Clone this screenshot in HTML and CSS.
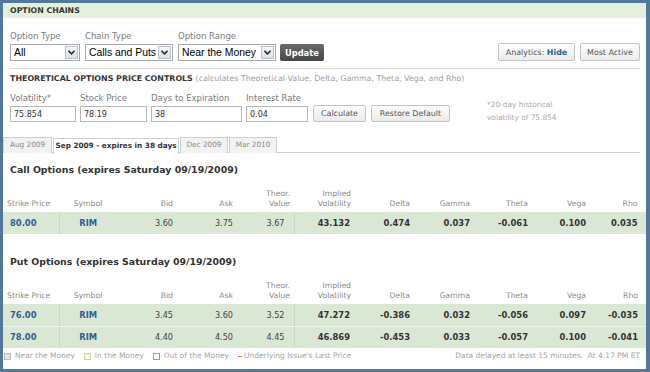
FILE: index.html
```html
<!DOCTYPE html>
<html lang="en">
<head>
    <meta charset="UTF-8">
    <title>Option Chains</title>
    <link rel="stylesheet" href="styles.css">
</head>
<body>
<div class="frame">
    <div class="hd">OPTION CHAINS</div>

    <div class="top">
        <div class="filters">
            <div class="field">
                <label>Option Type</label>
                <div class="sel w-type"><span class="val">All</span><span class="arr"><svg width="7" height="5" viewBox="0 0 7 5"><path d="M0.5 0.8 L3.5 3.8 L6.5 0.8" fill="none" stroke="#333" stroke-width="1.6"/></svg></span></div>
            </div>
            <div class="field">
                <label>Chain Type</label>
                <div class="sel w-chain"><span class="val">Calls and Puts</span><span class="arr"><svg width="7" height="5" viewBox="0 0 7 5"><path d="M0.5 0.8 L3.5 3.8 L6.5 0.8" fill="none" stroke="#333" stroke-width="1.6"/></svg></span></div>
            </div>
            <div class="field">
                <label>Option Range</label>
                <div class="sel w-range"><span class="val">Near the Money</span><span class="arr"><svg width="7" height="5" viewBox="0 0 7 5"><path d="M0.5 0.8 L3.5 3.8 L6.5 0.8" fill="none" stroke="#333" stroke-width="1.6"/></svg></span></div>
            </div>
            <button class="btn-dark">Update</button>
            <div class="right-btns">
                <button class="btn btn-analytics">Analytics: <b>Hide</b></button>
                <button class="btn btn-active">Most Active</button>
            </div>
        </div>

        <div class="rule"></div>

        <div class="theo-title">THEORETICAL OPTIONS PRICE CONTROLS <span>(calculates Theoretical Value, Delta, Gamma, Theta, Vega, and Rho)</span></div>

        <div class="calc">
            <div class="field">
                <label>Volatility*</label>
                <input class="inp w-vol" type="text" value="75.854">
            </div>
            <div class="field">
                <label>Stock Price</label>
                <input class="inp w-price" type="text" value="78.19">
            </div>
            <div class="field">
                <label>Days to Expiration</label>
                <input class="inp w-days" type="text" value="38">
            </div>
            <div class="field">
                <label>Interest Rate</label>
                <input class="inp w-rate" type="text" value="0.04">
            </div>
            <button class="btn btn-calc">Calculate</button>
            <button class="btn btn-restore">Restore Default</button>
            <div class="note">*20-day historical<br>volatility of 75.854</div>
        </div>
    </div>

    <div class="tabs">
        <div class="tab t-aug">Aug 2009</div>
        <div class="tab active t-sep">Sep 2009 - expires in 38 days</div>
        <div class="tab t-dec">Dec 2009</div>
        <div class="tab t-mar">Mar 2010</div>
    </div>

    <h3 class="sec-title call-title">Call Options (expires Saturday 09/19/2009)</h3>
    <table class="chain">
        <colgroup>
            <col class="c-strike"><col class="c-sym"><col class="c-num"><col class="c-num"><col class="c-theor">
            <col class="c-num"><col class="c-delta"><col class="c-num"><col class="c-sm"><col class="c-sm"><col>
        </colgroup>
        <thead>
            <tr>
                <th class="strike">Strike Price</th><th class="sym">Symbol</th><th>Bid</th><th>Ask</th><th>Theor.<br>Value</th>
                <th class="iv">Implied<br>Volatility</th><th>Delta</th><th>Gamma</th><th>Theta</th><th>Vega</th><th class="last">Rho</th>
            </tr>
        </thead>
        <tbody>
            <tr>
                <td class="strike">80.00</td><td class="sym">RIM</td><td>3.60</td><td>3.75</td><td class="theor">3.67</td>
                <td class="b">43.132</td><td class="b">0.474</td><td class="b">0.037</td><td class="b">-0.061</td><td class="b">0.100</td><td class="b last">0.035</td>
            </tr>
        </tbody>
    </table>

    <h3 class="sec-title put-title">Put Options (expires Saturday 09/19/2009)</h3>
    <table class="chain">
        <colgroup>
            <col class="c-strike"><col class="c-sym"><col class="c-num"><col class="c-num"><col class="c-theor">
            <col class="c-num"><col class="c-delta"><col class="c-num"><col class="c-sm"><col class="c-sm"><col>
        </colgroup>
        <thead>
            <tr>
                <th class="strike">Strike Price</th><th class="sym">Symbol</th><th>Bid</th><th>Ask</th><th>Theor.<br>Value</th>
                <th class="iv">Implied<br>Volatility</th><th>Delta</th><th>Gamma</th><th>Theta</th><th>Vega</th><th class="last">Rho</th>
            </tr>
        </thead>
        <tbody>
            <tr>
                <td class="strike">76.00</td><td class="sym">RIM</td><td>3.45</td><td>3.60</td><td class="theor">3.52</td>
                <td class="b">47.272</td><td class="b">-0.386</td><td class="b">0.032</td><td class="b">-0.056</td><td class="b">0.097</td><td class="b last">-0.035</td>
            </tr>
            <tr>
                <td class="strike">78.00</td><td class="sym">RIM</td><td>4.40</td><td>4.50</td><td class="theor">4.45</td>
                <td class="b">46.869</td><td class="b">-0.453</td><td class="b">0.033</td><td class="b">-0.057</td><td class="b">0.100</td><td class="b last">-0.041</td>
            </tr>
        </tbody>
    </table>

    <div class="legend">
        <span class="key"><i class="sq sq-near"></i>Near the Money</span>
        <span class="key"><i class="sq sq-in"></i>In the Money</span>
        <span class="key"><i class="sq sq-out"></i>Out of the Money</span>
        <span class="key"><i class="dash"></i>Underlying Issue's Last Price</span>
        <span class="delay">Data delayed at least 15 minutes.&nbsp; At 4:17 PM ET</span>
    </div>
</div>
</body>
</html>
```

FILE: styles.css
```css
* {
    box-sizing: border-box;
}
body {
    margin: 0;
    background-color: #fff;
    font-family: "DejaVu Sans", Verdana, sans-serif;
    color: #333;
}
.frame {
    width: 650px;
    height: 372px;
    border: 3px solid #52799a;
    border-right-width: 4px;
    overflow: hidden;
}
.hd {
    height: 15px;
    line-height: 15px;
    padding-left: 7px;
    background-color: #e3f0dd;
    font-size: 7.8px;
    font-weight: bold;
    color: #333;
}
.top {
    padding: 13px 6px 0 7px;
}
.filters,
.calc {
    display: flex;
    align-items: flex-end;
}
.field {
    display: flex;
    flex-direction: column;
    margin-right: 5px;
}
.field label {
    font-size: 8.5px;
    line-height: 10px;
    margin-bottom: 3px;
    color: #7a7a7a;
}
.sel {
    display: flex;
    align-items: center;
    justify-content: space-between;
    height: 17px;
    padding: 0 1px 0 3px;
    border: 1px solid #a9a9ad;
    font-family: "Liberation Sans", Arial, sans-serif;
    font-size: 10.4px;
    color: #000;
    white-space: nowrap;
}
.sel .arr {
    display: flex;
    flex: none;
    align-items: center;
    justify-content: center;
    width: 13px;
    height: 13px;
    margin-left: 1px;
    border: 1px solid #b9c1cc;
    background: linear-gradient(#f4f6f9, #dde2ea);
}
.w-type { width: 70px; }
.w-chain { width: 88px; }
.w-range { width: 98px; }
.btn-dark {
    height: 17px;
    margin-left: -1px;
    padding: 0 5px;
    border: 0;
    border-radius: 2px;
    background: linear-gradient(#6a6a6a, #474747);
    font-family: "DejaVu Sans", Verdana, sans-serif;
    font-size: 8.3px;
    font-weight: bold;
    color: #fff;
}
.right-btns {
    display: flex;
    margin-left: auto;
}
.btn {
    height: 18px;
    padding: 0 5px;
    border: 1px solid #c4c4c4;
    border-radius: 2px;
    background: linear-gradient(#fdfdfd, #ebebeb);
    font-family: "DejaVu Sans", Verdana, sans-serif;
    font-size: 7.9px;
    color: #555;
    white-space: nowrap;
}
.btn b {
    color: #2e6399;
}
.btn-analytics { width: 77px; }
.btn-active { width: 60px; margin-left: 5px; }
.rule {
    height: 1px;
    margin-top: 7px;
    background-color: #dcdcdc;
}
.theo-title {
    margin-top: 5px;
    line-height: 10px;
    font-size: 7.9px;
    font-weight: bold;
    color: #333;
    white-space: nowrap;
}
.theo-title span {
    font-weight: normal;
    color: #a0a0a0;
}
.calc {
    margin-top: 9px;
}
.calc .field {
    margin-right: 4px;
}
.inp {
    height: 16px;
    padding: 0 3px;
    border: 1px solid #b8b8b8;
    font-family: "DejaVu Sans", Verdana, sans-serif;
    font-size: 8px;
    color: #333;
}
.w-vol { width: 66px; }
.w-price { width: 67px; }
.w-days { width: 91px; }
.w-rate { width: 62px; }
.btn-calc { width: 53px; margin-left: 1px; height: 17px; }
.btn-restore { width: 79px; margin-left: 5px; height: 17px; }
.note {
    margin-left: 37px;
    margin-bottom: -2px;
    line-height: 13px;
    font-size: 7.4px;
    color: #a8a8a8;
}
.tabs {
    display: flex;
    margin: 15px 6px 0 0;
    height: 16px;
    border-bottom: 1px solid #cfcfcf;
}
.tab {
    height: 16px;
    line-height: 14px;
    margin-right: 1px;
    border: 1px solid #cfcfcf;
    border-bottom: 0;
    background-color: #f2f2f2;
    font-size: 7.3px;
    color: #8a8a8a;
    text-align: center;
}
.tab.active {
    position: relative;
    top: 1px;
    background-color: #fff;
    font-weight: bold;
    color: #333;
}
.t-aug { width: 49px; }
.t-sep { width: 126px; }
.t-dec { width: 48px; }
.t-mar { width: 48px; }
.sec-title {
    margin: 0;
    padding-left: 7px;
    line-height: 10px;
    font-size: 9.4px;
    font-weight: bold;
    color: #333;
}
.call-title { margin-top: 12px; }
.put-title { margin-top: 23px; }
.chain {
    width: 644px;
    margin-top: 14px;
    border-collapse: collapse;
    table-layout: fixed;
}
.c-strike { width: 56px; }
.c-sym { width: 58px; }
.c-num { width: 60px; }
.c-theor { width: 57px; }
.c-delta { width: 60px; }
.c-sm { width: 58px; }
.chain th {
    padding: 0 4px 3px 0;
    vertical-align: bottom;
    text-align: right;
    line-height: 10px;
    font-size: 7.7px;
    font-weight: normal;
    color: #8a8a8a;
}
.chain th.strike {
    padding-left: 4px;
    text-align: left;
}
.chain th.sym,
.chain td.sym {
    text-align: center;
    padding-right: 0;
}
.chain th.iv {
    padding-right: 3px;
}
.chain td {
    height: 22px;
    padding: 0 4px 0 0;
    background-color: #dbe7d5;
    border-bottom: 1px solid #eef4eb;
    text-align: right;
    font-size: 8.1px;
    color: #444;
}
.chain tbody tr:last-child td {
    border-bottom: 0;
}
.chain td.strike {
    padding-left: 7px;
    text-align: left;
    border-right: 1px solid #c9d8c2;
}
.chain td.strike,
.chain td.sym {
    font-weight: bold;
    font-size: 8.4px;
    color: #2f5f93;
}
.chain td.theor {
    padding-right: 9px;
    border-right: 1px solid #c9d8c2;
}
.chain td.b {
    font-weight: bold;
    font-size: 8.4px;
    color: #333;
}
.chain .last {
    padding-right: 9px;
}
.legend {
    display: flex;
    align-items: center;
    margin-top: 3px;
    padding: 0 6px 0 1px;
    line-height: 10px;
    font-size: 7.5px;
    color: #a5a5a5;
}
.key {
    display: flex;
    align-items: center;
    margin-right: 9px;
}
.sq {
    display: inline-block;
    width: 7px;
    height: 7px;
    margin-right: 4px;
    border: 1px solid #bdbdbd;
}
.sq-near { background-color: #e2ecdc; }
.sq-in { background-color: #fbfbe3; border-color: #d6d29a; }
.sq-out { background-color: #fff; border-color: #9a9a9a; }
.dash {
    display: inline-block;
    width: 4px;
    height: 1px;
    margin-right: 2px;
    background-color: #f07a3a;
}
.delay {
    margin-left: auto;
}
```
